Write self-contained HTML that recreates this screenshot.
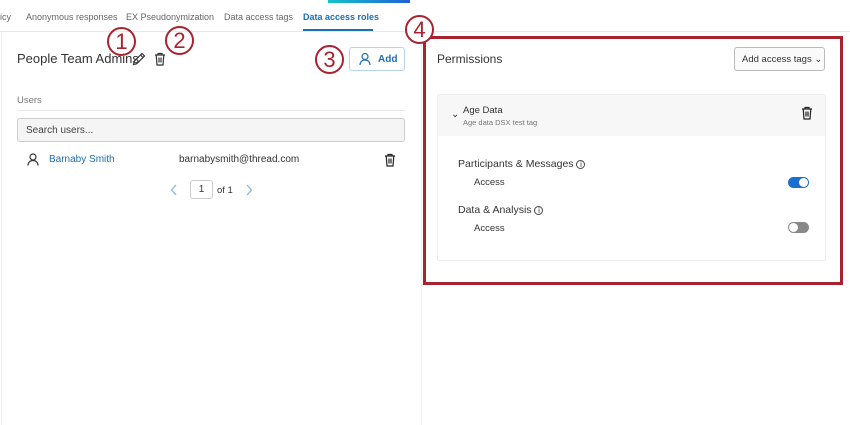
<!DOCTYPE html>
<html><head><style>
*{box-sizing:border-box;margin:0;padding:0}
body{width:850px;height:425px;overflow:hidden;background:#fff;font-family:"Liberation Sans",sans-serif;color:#333;position:relative}
.a{position:absolute}
.tab{position:absolute;top:12px;font-size:9px;color:#666;white-space:nowrap}
.circ{position:absolute;width:29px;height:29px;border:2.5px solid #a8232f;border-radius:50%;color:#a8232f;font-size:22px;font-weight:300;text-align:center;line-height:25px}
</style></head><body>
<div class="a" style="left:328px;top:0;width:82px;height:3px;background:linear-gradient(90deg,#17c3c9,#1f5fd8)"></div>
<div class="tab" style="left:0">icy</div>
<div class="tab" style="left:26px">Anonymous responses</div>
<div class="tab" style="left:126px">EX Pseudonymization</div>
<div class="tab" style="left:224px">Data access tags</div>
<div class="tab" style="left:303px;color:#1a6fb5;font-weight:bold">Data access roles</div>
<div class="a" style="left:303px;top:29px;width:70px;height:2px;background:#1a6fb5"></div>
<div class="a" style="left:0;top:31px;width:850px;height:1px;background:#e8e8e8"></div>
<div class="a" style="left:1px;top:32px;width:1px;height:393px;background:#eee"></div>
<div class="a" style="left:421px;top:32px;width:1px;height:393px;background:#eee"></div>

<div class="a" style="left:17px;top:51px;font-size:13px;color:#333">People Team Admins</div>
<svg class="a" style="left:132px;top:52px" width="14" height="14" viewBox="0 0 14 14" fill="none" stroke="#333" stroke-width="1.2"><path d="M1.5 12.5l.8-3.3L10 1.5l2.5 2.5-7.7 7.7z M8.5 3l2.5 2.5"/></svg>
<svg class="a" style="left:154px;top:52px" width="12" height="14" viewBox="0 0 12 14" fill="none" stroke="#333" stroke-width="1.2"><path d="M1 3h10M4 3V1.5h4V3M2.2 3l.8 10h6l.8-10M5 5.5v5M7 5.5v5"/></svg>
<div class="a" style="left:349px;top:47px;width:56px;height:24px;border:1px solid #b9d4ea;border-radius:3px;font-size:10px;color:#1a6fb5;font-weight:bold;padding:6px 0 0 28px">Add</div>
<svg class="a" style="left:359px;top:52px" width="12" height="14" viewBox="0 0 12 14" fill="none" stroke="#1a6fb5" stroke-width="1.2"><circle cx="6" cy="4.5" r="3"/><path d="M1 13c0-3 2-5 5-5s5 2 5 5"/></svg>
<div class="a" style="left:17px;top:95px;font-size:9.5px;color:#777">Users</div>
<div class="a" style="left:17px;top:110px;width:388px;height:1px;background:#e8e8e8"></div>
<div class="a" style="left:17px;top:118px;width:388px;height:24px;border:1px solid #ccc;border-radius:3px;background:#f5f5f5;font-size:10px;color:#444;padding:6px 0 0 8px">Search users...</div>
<svg class="a" style="left:27px;top:153px" width="12" height="13" viewBox="0 0 12 13" fill="none" stroke="#333" stroke-width="1.2"><circle cx="6" cy="4" r="3"/><path d="M1 12.5c0-3 2-5 5-5s5 2 5 5"/></svg>
<div class="a" style="left:49px;top:154px;font-size:10px;color:#1a6fb5">Barnaby Smith</div>
<div class="a" style="left:179px;top:154px;font-size:10px;color:#333">barnabysmith@thread.com</div>
<svg class="a" style="left:384px;top:153px" width="12" height="14" viewBox="0 0 12 14" fill="none" stroke="#222" stroke-width="1.2"><path d="M1 3h10M4 3V1.5h4V3M2.2 3l.8 10h6l.8-10M5 5.5v5M7 5.5v5"/></svg>
<svg class="a" style="left:170px;top:184px" width="8" height="12" viewBox="0 0 8 12" fill="none" stroke="#8ab6e0" stroke-width="1.3"><path d="M6 1L1.5 6 6 11"/></svg>
<div class="a" style="left:190px;top:180px;width:23px;height:19px;border:1px solid #ccc;border-radius:3px;font-size:10px;text-align:center;line-height:17px">1</div>
<div class="a" style="left:217px;top:185px;font-size:9.5px">of 1</div>
<svg class="a" style="left:245px;top:184px" width="8" height="12" viewBox="0 0 8 12" fill="none" stroke="#8ab6e0" stroke-width="1.3"><path d="M2 1l4.5 5L2 11"/></svg>

<div class="a" style="left:437px;top:52px;font-size:12px;color:#333">Permissions</div>
<div class="a" style="left:734px;top:47px;width:91px;height:24px;border:1px solid #bbb;border-radius:3px;background:#fafafa;font-size:9.5px;padding:6px 0 0 7px;color:#333">Add access tags ⌄</div>
<div class="a" style="left:437px;top:94px;width:389px;height:167px;border:1px solid #eee;border-radius:2px"></div>
<div class="a" style="left:438px;top:95px;width:387px;height:41px;background:#f7f7f7"></div>
<div class="a" style="left:451px;top:109px;font-size:10px">⌄</div>
<div class="a" style="left:463px;top:105px;font-size:9.5px;color:#333">Age Data</div>
<div class="a" style="left:463px;top:118px;font-size:7.5px;color:#777">Age data DSX test tag</div>
<svg class="a" style="left:801px;top:106px" width="12" height="14" viewBox="0 0 12 14" fill="none" stroke="#222" stroke-width="1.2"><path d="M1 3h10M4 3V1.5h4V3M2.2 3l.8 10h6l.8-10M5 5.5v5M7 5.5v5"/></svg>
<div class="a" style="left:458px;top:158px;font-size:10.5px">Participants &amp; Messages <span style="font-size:8px;border:1px solid #444;border-radius:50%;display:inline-block;width:9px;height:9px;line-height:8px;text-align:center">i</span></div>
<div class="a" style="left:474px;top:177px;font-size:9.5px">Access</div>
<div class="a" style="left:788px;top:177px;width:21px;height:11px;border-radius:6px;background:#1a6fd0"><div class="a" style="right:1px;top:1px;width:9px;height:9px;border-radius:50%;background:#fff"></div></div>
<div class="a" style="left:458px;top:204px;font-size:10.5px">Data &amp; Analysis <span style="font-size:8px;border:1px solid #444;border-radius:50%;display:inline-block;width:9px;height:9px;line-height:8px;text-align:center">i</span></div>
<div class="a" style="left:474px;top:223px;font-size:9.5px">Access</div>
<div class="a" style="left:788px;top:222px;width:21px;height:11px;border-radius:6px;background:#888"><div class="a" style="left:1px;top:1px;width:9px;height:9px;border-radius:50%;background:#fff"></div></div>

<div class="a" style="left:423px;top:36px;width:420px;height:249px;border:3px solid #a8232f"></div>
<div class="circ" style="left:107px;top:27px">1</div>
<div class="circ" style="left:165px;top:26px">2</div>
<div class="circ" style="left:315px;top:45px">3</div>
<div class="circ" style="left:405px;top:15px;background:#fff">4</div>
</body></html>
